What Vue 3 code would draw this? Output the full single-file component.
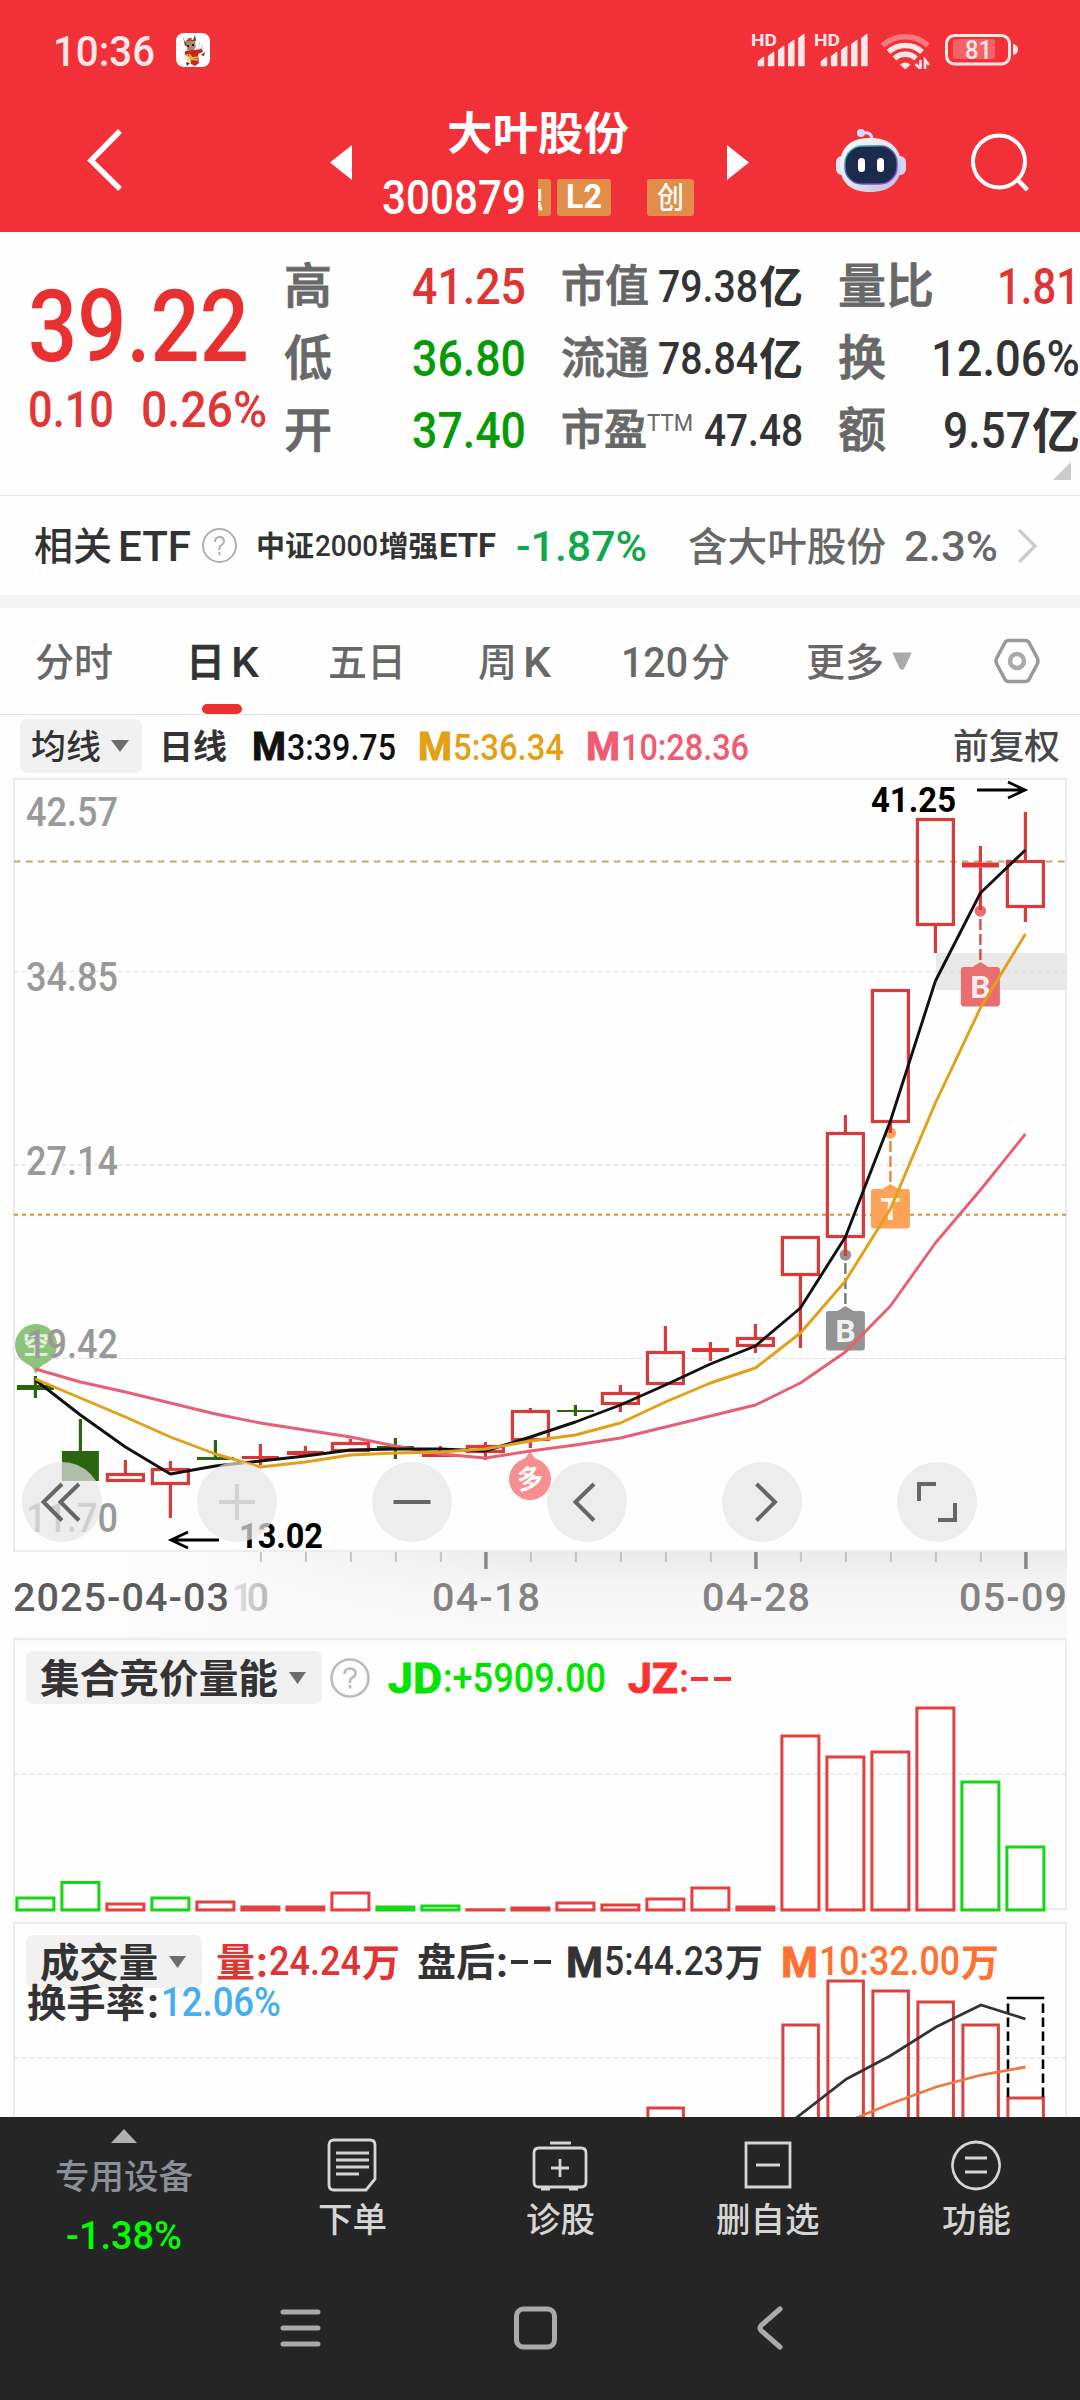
<style>
body {
    background-color: #fefefe;
}
</style>

<style scoped>
* {
    box-sizing: border-box;
}
.stock_page {
    width: 1080px;
    height: 2400px;
    overflow: hidden;
    font-family: Roboto, 'Noto Sans CJK SC', sans-serif;
    font-weight: 500;
    color: #333;
    background-color: #fefefe;
}
svg {
    display: block;
    flex: none;
}
.bold {
    font-weight: 700;
}
.light {
    font-weight: 400;
}
/* 標籤字再粗一點 */
.thick {
    stroke: currentColor;
    stroke-width: 0.9px;
}
.red {
    color: #e23333;
}
.green {
    color: #069b06;
}
.gray {
    color: #686868;
}

/* 狀態列 */
.top_bar {
    height: 232px;
    background-color: #f23037;
    color: #fff;
}
.status_bar {
    height: 100px;
    padding: 0 62px 0 53px;
    display: flex;
    align-items: center;
    justify-content: space-between;
    color: #fee7e8;
}
.status_left {
    display: flex;
    align-items: center;
    gap: 21px;
}
.nav_row {
    height: 132px;
    display: grid;
    grid-template-columns: 328px 52px 347px 109px 120px auto;
}
.nav_back {
    padding: 28px 0 0 87px;
}
.nav_arrow {
    padding-top: 44px;
}
.title_box {
    padding-top: 10px;
}
.title_name {
    padding-left: 67px;
}
.title_code {
    display: flex;
    align-items: center;
    margin-top: 23px;
    padding-left: 2px;
}
.tag {
    height: 37px;
    border-radius: 3px;
    background-color: #e28e4b;
    display: flex;
    align-items: center;
    justify-content: center;
}
.tag_cut {
    width: 13px;
    margin-left: 12px;
    overflow: hidden;
    justify-content: flex-end;
    padding-right: 8px;
    border-radius: 0 3px 3px 0;
}
.tag_l2 {
    width: 54px;
    margin-left: 6px;
}
.tag_gem {
    width: 47px;
    margin-left: 36px;
}

/* 報價 */
.quote {
    height: 264px;
    padding: 18px 0 0 28px;
    display: flex;
    border-bottom: 1px solid #e8e8e8;
    position: relative;
}
.price_col {
    width: 256px;
    padding-top: 40px;
    color: #e93030;
}
.change_row {
    display: flex;
    gap: 27px;
    margin-top: 30px;
    color: #e23535;
}
.stat_col {
    width: 242px;
    margin-right: 35px;
}
.stat_col:last-of-type {
    margin-right: 0;
}
.stat {
    height: 72px;
    display: flex;
    align-items: center;
    justify-content: space-between;
}
.stat_label svg {
    margin-top: -3px;
}
.stat_value {
    display: flex;
    align-items: center;
    gap: 1px;
}
.stat_label {
    display: flex;
    color: #686868;
}
.stat_label .ttm {
    margin-top: 4px;
}
.corner {
    position: absolute;
    right: 9px;
    bottom: 15px;
}

.etf_row {
    height: 99px;
    padding-left: 34px;
    display: flex;
    align-items: center;
}
.etf_word {
    margin-left: 6px;
}
.etf_help {
    margin-left: 10px;
}
.etf_name {
    display: flex;
    align-items: center;
    gap: 1px;
    margin-left: 18px;
}
.etf_rate {
    margin-left: 20px;
    color: #10a84c;
}
.etf_hold {
    margin-left: 41px;
}
.etf_percent {
    margin-left: 18px;
}
.etf_arrow {
    margin-left: 19px;
}
.band {
    height: 13px;
    background-color: #f4f4f4;
}

/* 週期 */
.tabs {
    height: 107px;
    padding-left: 35px;
    display: grid;
    grid-template-columns: 151px 142px 150px 143px 185px 188px auto;
    align-items: center;
    border-bottom: 1px solid #e5e5e5;
    color: #686868;
}
.tab {
    height: 104px;
    display: flex;
    align-items: center;
    gap: 6px;
    position: relative;
}
.tab_tight {
    gap: 3px;
}
.tab_more {
    gap: 8px;
}
.tab_active {
    color: #333;
}
.tab_active::after {
    content: '';
    position: absolute;
    left: 16px;
    bottom: -1px;
    width: 40px;
    height: 10px;
    border-radius: 5px;
    background-color: #e93030;
}
.ma_row {
    height: 61px;
    padding: 4px 20px 3px 20px;
    display: flex;
    align-items: center;
}
.pick {
    background-color: #f1f1f1;
    border-radius: 7px;
    display: flex;
    align-items: center;
}
.pick_ma {
    width: 122px;
    height: 54px;
    padding-left: 11px;
    gap: 10px;
}
.ma_title {
    margin-left: 17px;
}
.pair {
    display: flex;
    align-items: flex-end;
    gap: 1px;
}
.ma_item {
    margin-left: 22px;
}
.ma_item:nth-of-type(2) {
    margin-left: 25px;
}
.ma_right {
    margin-left: auto;
    color: #484848;
}

/* K線 */
.chart {
    height: 860px;
    position: relative;
}
.tools {
    position: absolute;
    left: 22px;
    top: 686px;
    display: flex;
    gap: 95px;
}
.tool {
    width: 80px;
    height: 80px;
    border-radius: 50%;
    background-color: rgba(230, 230, 230, 0.71);
}
.panel {
    position: relative;
}
.panel_auction {
    height: 282px;
}
.panel_volume {
    height: 199px;
    overflow: hidden;
}
.panel_head {
    position: absolute;
    left: 26px;
    height: 53px;
    display: flex;
    align-items: center;
}
.panel_auction .panel_head {
    top: 15px;
}
.panel_volume .panel_head {
    top: 17px;
}
.pick_panel {
    height: 53px;
    padding: 0 16px 0 14px;
    gap: 11px;
}
.panel_help {
    margin-left: 8px;
}
.head_jd {
    margin-left: 18px;
    color: #00e400;
}
.head_jz {
    margin-left: 22px;
    color: #fb3232;
}
.head_vol {
    margin-left: 14px;
}
.head_after {
    margin-left: 17px;
}
.head_m5 {
    margin-left: 12px;
}
.head_m10 {
    margin-left: 18px;
    color: #ff7033;
}
.turnover {
    position: absolute;
    left: 27px;
    top: 65px;
    display: flex;
    align-items: center;
    gap: 2px;
}
.blue {
    color: #45aeef;
}

/* 底部 */
.bottom {
    height: 283px;
    background-color: #252525;
    color: #d5d5d5;
}
.bottom_menu {
    height: 163px;
    display: grid;
    grid-template-columns: 248px 208px 208px 208px 208px;
}
.menu_item {
    display: flex;
    flex-direction: column;
    align-items: center;
    padding-top: 20px;
}
.menu_item svg + svg {
    margin-top: 9px;
}
.sector {
    display: flex;
    flex-direction: column;
    align-items: center;
    padding-top: 12px;
    color: #8b9098;
}
.sector_name {
    margin-top: 16px;
}
.sector_rate {
    margin-top: 28px;
    color: #0f0;
}
.system_nav {
    padding: 23px 0 0 278px;
    display: flex;
    gap: 190px;
}
</style>

<template>
    <div class="stock_page">
        <div class="top_bar">
            <div class="status_bar">
                <div class="status_left">
                    <Fit w="102" s="43">10:36</Fit>
                    <svg width="34" height="34" viewBox="0 0 34 34">
                        <rect width="34" height="34" rx="8" fill="#fff" />
                        <path d="M7 4l2 5 3-3 5 1 2-5 1 5-3 6H9z" fill="#6b4630" />
                        <path d="M10 8h9l1 6-4 5-5-2z" fill="#a98a6c" />
                        <path d="M12 5h4l-1 3h-2z" fill="#e33" />
                        <path d="M11 12h2v2h-2zM16 11h2v2h-2z" fill="#222" />
                        <path d="M9 18l8-1 9-1 1 3-5 2 1 9-4 3-4-2-1-7-5-2z" fill="#c9261c" />
                        <path d="M13 21l3 4 7-1M13 26l9 1M11 21l1 7" stroke="#f2c230" stroke-width="1.6" fill="none" />
                        <path d="M10 29l4 1-3 3zM25 22l4-3-1 4z" fill="#553015" />
                        <path d="M22 14l2-5M25 15l2-4M21 16l7-1" stroke="#bcd2d2" fill="none" />
                    </svg>
                </div>
                <svg width="268" height="38" viewBox="750 31 268 38" fill="#fee7e8">
                    <text x="751" y="46" font-size="17" class="bold" textLength="26" lengthAdjust="spacingAndGlyphs">HD</text>
                    <text x="814" y="46" font-size="17" class="bold" textLength="26" lengthAdjust="spacingAndGlyphs">HD</text>
                    <g v-for="n in [0, 63]" :key="n">
                        <path
                            v-for="(bar, k) in [8, 13, 19, 25, 31]"
                            :key="k"
                            :d="`M${758.5 + n + k * 10.1} 65.5v${-bar + 4}l5-4v${bar}z`"
                            stroke="#fee7e8"
                            stroke-linejoin="round"
                            stroke-width="1.500"
                        />
                    </g>
                    <g fill="none" stroke="#fee7e8" stroke-width="5.500">
                        <path d="M882.500 45.500a34 34 0 0 1 45.500 0" opacity="0.4" />
                        <path d="M888.500 52a25 25 0 0 1 33.500 0" />
                        <path d="M894.500 58.500a16 16 0 0 1 21.500 0" />
                    </g>
                    <path d="M905.300 69.500l-5.300-5q5.300-4 10.600 0z" />
                    <path d="M920.500 60v9l-5-5M925 69v-9l4 5" fill="none" stroke="#fee7e8" stroke-width="2.600" />
                    <rect x="946.500" y="35.500" width="63" height="28.500" rx="8" fill="none" stroke="#fee7e8" stroke-width="3" />
                    <rect x="953" y="39" width="42" height="20" rx="3" opacity="0.28" />
                    <path d="M1013 44q5 1 5 5.500t-5 5.500z" />
                    <text x="965" y="59" font-size="25" textLength="27" lengthAdjust="spacingAndGlyphs">81</text>
                </svg>
            </div>
            <div class="nav_row">
                <div class="nav_back">
                    <svg width="38" height="64" viewBox="0 0 38 64">
                        <path d="M33 3L4 32.500L33 61" fill="none" stroke="#fff" stroke-width="5.500" />
                    </svg>
                </div>
                <div class="nav_arrow">
                    <svg width="24" height="38"><path d="M24 1v35L2 18.500z" fill="#fff" /></svg>
                </div>
                <div class="title_box">
                    <div class="title_name"><Fit w="182" s="45.500" class="bold">大叶股份</Fit></div>
                    <div class="title_code">
                        <Fit w="144" s="47.500">300879</Fit>
                        <div class="tag tag_cut"><Fit w="28" s="28" class="bold">融</Fit></div>
                        <div class="tag tag_l2"><Fit w="36" s="33" class="bold">L2</Fit></div>
                        <div class="tag tag_gem"><Fit w="27" s="30">创</Fit></div>
                    </div>
                </div>
                <div class="nav_arrow">
                    <svg width="24" height="38"><path d="M0 1v35L22 18.500z" fill="#fff" /></svg>
                </div>
                <div class="nav_robot">
                    <svg width="70" height="95" viewBox="0 -28 70 95">
                        <defs>
                            <linearGradient id="shell" x1="0" y1="0" x2="1" y2="1">
                                <stop offset="0" stop-color="#fff" />
                                <stop offset="0.6" stop-color="#dcdcf0" />
                                <stop offset="1" stop-color="#b9b8dd" />
                            </linearGradient>
                            <linearGradient id="visor" x1="0" y1="0" x2="1" y2="1">
                                <stop offset="0" stop-color="#58e0ea" />
                                <stop offset="0.4" stop-color="#3d5896" />
                                <stop offset="1" stop-color="#9b50e8" />
                            </linearGradient>
                        </defs>
                        <path d="M26 5q10-2 10 7" fill="none" stroke="#d8dcf5" stroke-width="3" />
                        <circle cx="25" cy="5" r="4" fill="#d5dbfa" />
                        <rect x="0" y="28" width="12" height="19" rx="6" fill="#e4e4f7" />
                        <rect x="58" y="28" width="12" height="19" rx="6" fill="#d6d6f0" />
                        <path d="M34 10C54 10 65 20 65 37S54 64 34 64 4 54 4 37 14 10 34 10z" fill="url(#shell)" />
                        <rect x="9" y="18" width="52" height="38" rx="17" fill="#1c2a4c" stroke="url(#visor)" stroke-width="1.500" />
                        <rect x="22" y="30" width="7" height="14" rx="3.500" fill="#fff" />
                        <rect x="41" y="30" width="7" height="14" rx="3.500" fill="#fff" />
                    </svg>
                </div>
                <div class="nav_search">
                    <svg width="78" height="95" viewBox="955 100 78 95">
                        <circle cx="998" cy="161.500" r="26" fill="none" stroke="#fff" stroke-width="4" />
                        <path d="M1016 179l10.500 11" stroke="#fff" stroke-width="4.500" />
                    </svg>
                </div>
            </div>
        </div>

        <div class="quote">
            <div class="price_col">
                <Fit w="221" s="100">39.22</Fit>
                <div class="change_row">
                    <Fit w="86" s="50">0.10</Fit>
                    <Fit w="126" s="50">0.26%</Fit>
                </div>
            </div>
            <div v-for="(col, c) in stats" :key="c" class="stat_col">
                <div v-for="row in col" :key="row.label" class="stat">
                    <div class="stat_label">
                        <Fit :w="row.label.length * row.ls" :s="row.ls" class="thick">{{ row.label }}</Fit>
                        <Fit v-if="row.sup" w="46" s="24" class="ttm light">{{ row.sup }}</Fit>
                    </div>
                    <div class="stat_value" :class="row.color">
                        <Fit :w="row.w" :s="row.s">{{ row.value }}</Fit>
                        <Fit v-if="row.unit" :w="row.ls" :s="row.ls" class="bold">{{ row.unit }}</Fit>
                    </div>
                </div>
            </div>
            <svg class="corner" width="18" height="18"><path d="M18 0v18H0z" fill="#ccc" /></svg>
        </div>

        <div class="etf_row">
            <Fit w="78" s="39">相关</Fit>
            <Fit w="73" s="42" class="etf_word">ETF</Fit>
            <svg class="etf_help" width="37" height="37" viewBox="0 0 37 37" fill="none" stroke="#b0b0b0" stroke-width="2">
                <circle cx="18.500" cy="18.500" r="16.500" />
                <path d="M14 15q0-5 4.500-5t4.500 4.500q0 2-2.500 3.500t-2 5M18.500 25v3" />
            </svg>
            <div class="etf_name">
                <Fit w="58" s="29" class="bold">中证</Fit>
                <Fit w="63" s="30">2000</Fit>
                <Fit w="59" s="29" class="bold">增强</Fit>
                <Fit w="57" s="33" class="bold">ETF</Fit>
            </div>
            <Fit w="131" s="43" class="etf_rate">-1.87%</Fit>
            <Fit w="198" s="39.500" class="etf_hold gray">含大叶股份</Fit>
            <Fit w="94" s="43" class="etf_percent gray">2.3%</Fit>
            <svg class="etf_arrow" width="22" height="38"><path d="M2 3L18 19L2 35" fill="none" stroke="#ccc" stroke-width="3.500" /></svg>
        </div>
        <div class="band"></div>

        <div class="tabs">
            <div class="tab"><Fit w="78" s="39">分时</Fit></div>
            <div class="tab tab_active"><Fit w="39" s="39" class="thick">日</Fit><Fit w="28" s="43">K</Fit></div>
            <div class="tab"><Fit w="78" s="39">五日</Fit></div>
            <div class="tab"><Fit w="39" s="39">周</Fit><Fit w="28" s="43">K</Fit></div>
            <div class="tab tab_tight"><Fit w="67" s="43">120</Fit><Fit w="39" s="39">分</Fit></div>
            <div class="tab tab_more">
                <Fit w="78" s="39">更多</Fit>
                <svg width="20" height="18"><path d="M1 1h18l-7 15q-2 3-4 0z" fill="#aaa" stroke="#aaa" stroke-linejoin="round" /></svg>
            </div>
            <div class="tab">
                <svg width="46" height="46" viewBox="0 0 46 46" fill="none" stroke="#999" stroke-width="3.500" stroke-linejoin="round">
                    <path d="M15 2.500h16q3 0 4 2l8 15q2 3.500 0 7l-8 15q-1 2-4 2H15q-3 0-4-2l-8-15q-2-3.500 0-7l8-15q1-2 4-2z" />
                    <circle cx="23" cy="23" r="7" stroke-width="4.500" stroke="#aaa" />
                </svg>
            </div>
        </div>

        <div class="ma_row">
            <div class="pick pick_ma">
                <Fit w="70" s="34">均线</Fit>
                <svg width="18" height="12"><path d="M0 0h18l-9 12z" fill="#6c6c6c" /></svg>
            </div>
            <Fit w="68" s="34" class="ma_title bold">日线</Fit>
            <div v-for="m in maList" :key="m.name" class="pair ma_item" :style="{ color: m.color }">
                <Fit w="34" s="39" class="bold thick">M</Fit>
                <Fit :w="m.w" s="36">{{ m.name }}</Fit>
            </div>
            <Fit w="107" s="35.500" class="ma_right">前复权</Fit>
        </div>

        <div class="chart">
            <svg width="1080" height="860" viewBox="0 776 1080 860">
                <defs>
                    <linearGradient id="axis" x1="0" y1="0" x2="0" y2="1">
                        <stop offset="0" stop-color="#ebebeb" />
                        <stop offset="0.45" stop-color="#f6f6f6" />
                        <stop offset="1" stop-color="#fafafa" />
                    </linearGradient>
                    <linearGradient id="fade" x1="0" y1="0" x2="1" y2="0">
                        <stop offset="0" stop-color="#fefefe" />
                        <stop offset="0.4" stop-color="#fafafa" />
                        <stop offset="1" stop-color="#fafafa" stop-opacity="0" />
                    </linearGradient>
                    <linearGradient id="ten" x1="0" y1="0" x2="1" y2="0">
                        <stop offset="0" stop-color="#e8e8e8" />
                        <stop offset="1" stop-color="#b5b5b5" />
                    </linearGradient>
                </defs>
                <rect x="14" y="1552" width="1053" height="84" fill="url(#axis)" />
                <rect x="14" y="1552" width="520" height="84" fill="url(#fade)" />
                <rect x="14" y="779" width="1052" height="772" fill="none" stroke="#ececec" stroke-width="2" />

                <rect x="936" y="953" width="131" height="37" fill="#e9e9e9" />
                <g fill="none" stroke-width="1.500">
                    <path d="M14 861.500H1066" stroke="#bba96f" stroke-width="1.800" stroke-dasharray="6.500 5.500" />
                    <path d="M14 971.500H1066" stroke="#ddd" stroke-width="1" stroke-dasharray="4 4" />
                    <path d="M14 1165H1066" stroke="#e6e6e6" stroke-dasharray="4 4" />
                    <path d="M14 1214.800H1066" stroke="#df8a3e" stroke-width="2" stroke-dasharray="4 4" />
                    <path d="M14 1358.500H1066" stroke="#ddd" stroke-width="1" stroke-dasharray="5 3" />
                </g>

                <!-- 多空標記 -->
                <g class="bold">
                    <path d="M28 1364q4 2 8 10q4-8 8-10z" fill="#8cc47a" />
                    <circle cx="36" cy="1345" r="21" fill="#8cc47a" />
                    <text x="23" y="1354" font-size="26" fill="#fff" fill-opacity="0.75">空</text>
                    <path d="M521 1461q6-3 9-11q3 8 9 11z" fill="#f78f90" />
                    <circle cx="530" cy="1479" r="21" fill="#f78f90" />
                    <text x="517" y="1488" font-size="26" fill="#fff" transform="rotate(-10 530 1479)">多</text>
                </g>

                <!-- 買賣點 -->
                <g v-for="b in marks" :key="b.i">
                    <ellipse :cx="px(b.i)" :cy="b.dot" rx="5.800" ry="5.800" :fill="b.color" />
                    <path :d="`M${px(b.i)} ${b.dot + 8}V${b.top - 5}`" :stroke="b.line" stroke-width="2.400" stroke-dasharray="11 4" />
                    <path :d="`M${px(b.i) - 8} ${b.top}l8-5l8 5z`" :fill="b.color" />
                    <rect :x="px(b.i) - 19.500" :y="b.top" width="39" height="39.500" rx="3" :fill="b.color" />
                    <text :x="px(b.i)" :y="b.top + 31" font-size="32" class="bold" text-anchor="middle" fill="#fff" fill-opacity="0.88">{{ b.text }}</text>
                </g>

                <!-- 蠟燭 -->
                <g v-for="(k, i) in candles" :key="i" :stroke="k[0] ? '#d93a3a' : '#2d6410'" stroke-width="3.200" fill="none">
                    <path v-if="k[1] < k[2]" :d="`M${px(i)} ${k[1]}V${k[2]}`" />
                    <path v-if="k[4] > k[3]" :d="`M${px(i)} ${k[3]}V${k[4]}`" />
                    <rect v-if="k[0] && k[3] - k[2] > 5" :x="px(i) - 18" :y="k[2] + 1.500" width="36" :height="k[3] - k[2] - 3" />
                    <rect v-else :x="px(i) - 18.500" :y="k[2]" width="37" :height="k[3] - k[2]" stroke="none" :fill="k[0] ? '#e03434' : '#2d6410'" />
                </g>

                <g fill="none" stroke-width="2.900" stroke-linejoin="round">
                    <polyline :points="line(ma10)" stroke="#e85f75" />
                    <polyline :points="line(ma3)" stroke="#111" />
                    <polyline :points="line(ma5)" stroke="#e2a018" />
                </g>

                <g font-size="40" fill="#999">
                    <text v-for="p in scale" :key="p.t" x="26" :y="p.y" textLength="92" lengthAdjust="spacingAndGlyphs">{{ p.t }}</text>
                </g>
                <g font-size="35" fill="#000" class="bold">
                    <text x="871" y="811.500" textLength="85" lengthAdjust="spacingAndGlyphs">41.25</text>
                    <text x="239" y="1547.500" textLength="84" lengthAdjust="spacingAndGlyphs">13.02</text>
                </g>
                <g fill="none" stroke="#000" stroke-width="2.800">
                    <path d="M977 790h48M1008 782l17 8l-17 8" />
                    <path d="M219 1540h-48M188 1532l-17 8l17 8" />
                </g>

                <path v-for="i in minorTicks" :key="i" :d="`M${px(i) + 0.500} 1552v10`" stroke="#c4c4c4" stroke-width="2" />
                <path v-for="i in [10, 16, 22]" :key="i" :d="`M${px(i) + 0.500} 1552v17`" stroke="#888" stroke-width="3.500" />
                <g font-size="39.500">
                    <text
                        v-for="d in dates"
                        :key="d.x"
                        :x="d.x"
                        y="1611"
                        :fill="d.color"
                        :textLength="d.w"
                        lengthAdjust="spacing"
                    >{{ d.t }}</text>
                </g>
            </svg>
            <div class="tools">
                <div v-for="(t, n) in tools" :key="n" class="tool">
                    <svg width="80" height="80" fill="none" stroke-width="4" :stroke="t.color"><path :d="t.d" /></svg>
                </div>
            </div>
        </div>

        <div class="panel panel_auction">
            <svg width="1080" height="282" viewBox="0 1636 1080 282">
                <rect x="14" y="1636" width="1053" height="9" fill="#fafafa" />
                <rect x="14" y="1639" width="1052" height="270" fill="none" stroke="#ececec" stroke-width="2" />
                <path d="M14 1774H1066" stroke="#e6e6e6" stroke-width="1.500" stroke-dasharray="5 3" />
                <rect
                    v-for="(a, i) in auction"
                    :key="i"
                    :x="px(i) - 18.500"
                    :y="a[1] + 1"
                    width="37"
                    :height="1909 - a[1]"
                    stroke-width="3"
                    :stroke="a[0] ? '#e34040' : '#16d616'"
                    fill="none"
                />
            </svg>
            <div class="panel_head">
                <div class="pick pick_panel">
                    <Fit w="238" s="39.500" class="bold">集合竞价量能</Fit>
                    <svg width="17" height="12"><path d="M0 0h17l-8.500 12z" fill="#6c6c6c" /></svg>
                </div>
                <svg class="panel_help" width="40" height="40" viewBox="0 0 40 40" fill="none" stroke="#bbb" stroke-width="2.600">
                    <circle cx="20" cy="20" r="18.500" />
                    <path d="M14.500 16q0-5.500 5.500-5.500t5.500 5q0 2.500-3 4t-2.500 5.500M20 27v3.500" />
                </svg>
                <div class="pair head_jd">
                    <Fit w="54" s="43" class="bold thick">JD</Fit>
                    <Fit w="163" s="40">:+5909.00</Fit>
                </div>
                <div class="pair head_jz">
                    <Fit w="50" s="43" class="bold thick">JZ</Fit>
                    <Fit w="10" s="40">:</Fit>
                    <svg width="44" height="28"><path d="M1 14h17M24 14h17" stroke="currentColor" stroke-width="3.800" /></svg>
                </div>
            </div>
        </div>

        <div class="panel panel_volume">
            <svg width="1080" height="199" viewBox="0 1918 1080 199">
                <rect x="14" y="1923" width="1052" height="270" fill="none" stroke="#ececec" stroke-width="2" />
                <path d="M14 2058H1066" stroke="#e6e6e6" stroke-width="1.500" stroke-dasharray="5 3" />
                <g fill="none" stroke="#da4242" stroke-width="3">
                    <rect v-for="v in volume" :key="v[0]" :x="px(v[0]) - 17.500" :y="v[1]" width="35.500" height="200" />
                </g>
                <path d="M1008 2097V1997M1043 2097V1997" fill="none" stroke="#000" stroke-width="2.600" stroke-dasharray="9.500 4.500" />
                <path d="M1007 1998H1044" stroke="#000" stroke-width="2.600" />
                <g fill="none" stroke-width="2.800">
                    <path d="M796 2118L846.500 2079L890 2056L936 2027L981 2005L1025.500 2019" stroke="#333" />
                    <path d="M856 2118L890 2104L936 2087L981 2075L1025.500 2067" stroke="#ee7843" />
                </g>
            </svg>
            <div class="panel_head">
                <div class="pick pick_panel">
                    <Fit w="118" s="39.500" class="bold">成交量</Fit>
                    <svg width="17" height="12"><path d="M0 0h17l-8.500 12z" fill="#6c6c6c" /></svg>
                </div>
                <div class="stat_value head_vol red">
                    <Fit w="39" s="39" class="bold">量</Fit>
                    <Fit w="12" s="42" class="bold">:</Fit>
                    <Fit w="92" s="40">24.24</Fit>
                    <Fit w="38" s="38" class="bold">万</Fit>
                </div>
                <div class="stat_value head_after">
                    <Fit w="78" s="39" class="bold">盘后</Fit>
                    <Fit w="12" s="42" class="bold">:</Fit>
                    <svg width="45" height="28"><path d="M2 14h17M25 14h17" stroke="currentColor" stroke-width="3.800" /></svg>
                </div>
                <div class="stat_value head_m5">
                    <Fit w="37" s="43" class="bold thick">M</Fit>
                    <Fit w="120" s="40">5:44.23</Fit>
                    <Fit w="38" s="38" class="bold">万</Fit>
                </div>
                <div class="stat_value head_m10">
                    <Fit w="37" s="43" class="bold thick">M</Fit>
                    <Fit w="141" s="40">10:32.00</Fit>
                    <Fit w="38" s="38" class="bold">万</Fit>
                </div>
            </div>
            <div class="turnover">
                <Fit w="118" s="39" class="bold">换手率</Fit>
                <Fit w="12" s="42" class="bold">:</Fit>
                <Fit w="120" s="40" class="blue">12.06%</Fit>
            </div>
        </div>

        <div class="bottom">
            <div class="bottom_menu">
                <div class="sector">
                    <svg width="26" height="14"><path d="M13 0l13 14H0z" fill="#b0b0b0" /></svg>
                    <Fit w="138" s="34.500" class="sector_name">专用设备</Fit>
                    <Fit w="116" s="38" class="sector_rate">-1.38%</Fit>
                </div>
                <div v-for="m in menus" :key="m.name" class="menu_item">
                    <svg width="60" height="56" viewBox="0 0 60 56" fill="none" stroke="#d5d5d5" stroke-width="2.800"><path :d="m.icon" /></svg>
                    <Fit :w="m.name.length * 34.500" s="34.500">{{ m.name }}</Fit>
                </div>
            </div>
            <div class="system_nav">
                <svg width="44" height="50" fill="none" stroke="#aaa" stroke-width="5" stroke-linecap="round">
                    <path d="M5 9h35M5 25h35M5 41h35" />
                </svg>
                <svg width="54" height="50"><rect x="4.500" y="6" width="38" height="38" rx="7" fill="none" stroke="#aaa" stroke-width="5" /></svg>
                <svg width="34" height="50">
                    <path d="M24 6L5 22.500Q3 25 5 27.500L24 44" fill="none" stroke="#aaa" stroke-width="5" stroke-linecap="round" />
                </svg>
            </div>
        </div>
    </div>
</template>

<script setup>
import { h } from 'vue'

//固定寬度文字，中文用全形方框，數字只佔大寫高度
const Fit = (props, { slots }) => {
    const text = slots.default()[0].children.trim()
    const w = Number(props.w)
    const s = Number(props.s)
    const isCjk = /[\u4e00-\u9fff]/.test(text)
    const height = isCjk ? s : s * 0.711
    const y = isCjk ? s * 0.88 : height
    return h('svg', { width: w, height, style: { overflow: 'visible' } }, [
        h('text', { x: 0, y, 'font-size': s, fill: 'currentColor', textLength: w, lengthAdjust: 'spacingAndGlyphs' }, text),
    ])
}
Fit.props = ['w', 's']

//報價欄位
const stats = [
    [
        { label: '高', ls: 48, value: '41.25', w: 114, s: 50, color: 'red' },
        { label: '低', ls: 48, value: '36.80', w: 114, s: 50, color: 'green' },
        { label: '开', ls: 48, value: '37.40', w: 114, s: 50, color: 'green' },
    ],
    [
        { label: '市值', ls: 44, value: '79.38', w: 100, s: 45, unit: '亿' },
        { label: '流通', ls: 44, value: '78.84', w: 100, s: 45, unit: '亿' },
        { label: '市盈', ls: 43, sup: 'TTM', value: '47.48', w: 99, s: 45 },
    ],
    [
        { label: '量比', ls: 48, value: '1.81', w: 83, s: 50, color: 'red' },
        { label: '换', ls: 48, value: '12.06%', w: 149, s: 50 },
        { label: '额', ls: 48, value: '9.57', w: 88, s: 50, unit: '亿' },
    ],
]

const maList = [
    { name: '3:39.75', w: 109, color: '#111' },
    { name: '5:36.34', w: 111, color: '#e2a012' },
    { name: '10:28.36', w: 128, color: '#ee5c72' },
]

const scale = [
    { t: '42.57', y: 826 },
    { t: '34.85', y: 991 },
    { t: '27.14', y: 1175 },
    { t: '19.42', y: 1358 },
    { t: '11.70', y: 1532 },
]
const dates = [
    { t: '2025-04-03', x: 13, w: 216, color: '#5c5c5c' },
    { t: '10', x: 231, w: 38, color: 'url(#ten)' },
    { t: '04-18', x: 432, w: 108, color: '#838383' },
    { t: '04-28', x: 702, w: 108, color: '#838383' },
    { t: '05-09', x: 959, w: 108, color: '#838383' },
]
const minorTicks = [5, 6, 7, 8, 9, 11, 12, 13, 14, 15, 17, 18, 19, 20, 21]

const px = (i) => 35.4 + i * 45
const line = (list) => list.map((y, i) => `${px(i)},${y}`).join(' ')

//[漲跌, 最高, 實體上, 實體下, 最低]
const candles = [
    [0, 1376, 1385, 1390, 1398],
    [0, 1419, 1451, 1481, 1481],
    [1, 1460, 1473, 1482, 1482],
    [1, 1461, 1468, 1485, 1518],
    [0, 1440, 1457, 1460, 1460],
    [1, 1444, 1456, 1459, 1465],
    [1, 1446, 1451, 1455, 1455],
    [1, 1439, 1442, 1452, 1452],
    [0, 1438, 1446, 1450, 1459],
    [1, 1446, 1454, 1457, 1457],
    [1, 1442, 1445, 1453, 1460],
    [1, 1408, 1410, 1441, 1448],
    [0, 1405, 1410, 1412, 1416],
    [1, 1385, 1392, 1405, 1412],
    [1, 1326, 1351, 1385, 1385],
    [1, 1342, 1348, 1352, 1361],
    [1, 1324, 1337, 1347, 1353],
    [1, 1236, 1236, 1276, 1348],
    [1, 1115, 1132, 1238, 1256],
    [1, 989, 989, 1123, 1133],
    [1, 818, 818, 926, 953],
    [1, 846, 862.5, 867.5, 910],
    [1, 812, 860, 908, 922],
]
const ma3 = [
    1380, 1415, 1447, 1474, 1466, 1461, 1456, 1450, 1449, 1449, 1451, 1437, 1422, 1405, 1385, 1364, 1346, 1308, 1237,
    1121, 981, 893, 850,
]
const ma5 = [
    1379, 1398, 1417, 1437, 1454, 1467, 1462, 1455, 1453, 1452, 1449, 1441, 1435, 1423, 1402, 1383, 1368, 1333, 1281,
    1209, 1103, 1008, 934,
]
const ma10 = [
    1369, 1382, 1392, 1403, 1414, 1423, 1430, 1437, 1446, 1454, 1458, 1451, 1445, 1438, 1427, 1416, 1405, 1383, 1352,
    1306, 1243, 1190, 1134,
]
const marks = [
    { i: 18, dot: 1255, top: 1311, text: 'B', color: '#939393', line: '#777' },
    { i: 19, dot: 1133, top: 1189, text: 'T', color: '#fda259', line: '#e08a3c' },
    { i: 21, dot: 911, top: 967, text: 'B', color: '#e96e6f', line: '#e04848' },
]

//集合競價
const auction = [
    [0, 1897], [0, 1881.5], [1, 1903], [0, 1897], [1, 1901], [1, 1906], [1, 1906], [1, 1892],
    [0, 1906], [0, 1905], [1, 1908.8], [1, 1907], [1, 1902], [1, 1904], [1, 1898], [1, 1887],
    [1, 1906], [1, 1735], [1, 1756], [1, 1751], [1, 1707], [0, 1781], [0, 1846],
]
const volume = [[14, 2108], [17, 2025], [18, 1981], [19, 1991], [20, 2002], [21, 2025], [22, 2098]]

const tools = [
    { color: '#666', d: 'M40 22L21.500 40L40 58.500M57 22L38.500 40L57 58.500' },
    { color: '#d2d2d2', d: 'M22 40H58M40 22V58' },
    { color: '#666', d: 'M21.500 40H58.500' },
    { color: '#666', d: 'M47 22L28.500 40L47 58.500' },
    { color: '#666', d: 'M34.500 22L53 40L34.500 58.500' },
    { color: '#666', d: 'M22 39V22H39M58 41V58H41' },
]

const menus = [
    { name: '下单', icon: 'M12 3h36q5 0 5 5v34l-9 11H12q-5 0-5-5V8q0-5 5-5zM14 16h33M14 23h33M14 30h33M14 37h23' },
    { name: '诊股', icon: 'M9 11h42q5 0 5 5v29q0 5-5 5H9q-5 0-5-5V16q0-5 5-5zM20 6h21M30 22v18M21 31h18M11 52h9M39 52h9' },
    { name: '删自选', icon: 'M8 6h44v44H8zM18 28h24' },
    { name: '功能', icon: 'M30 5a23.500 23.500 0 1 0 .1 0zM19 21h22M19 35h22' },
]
</script>
